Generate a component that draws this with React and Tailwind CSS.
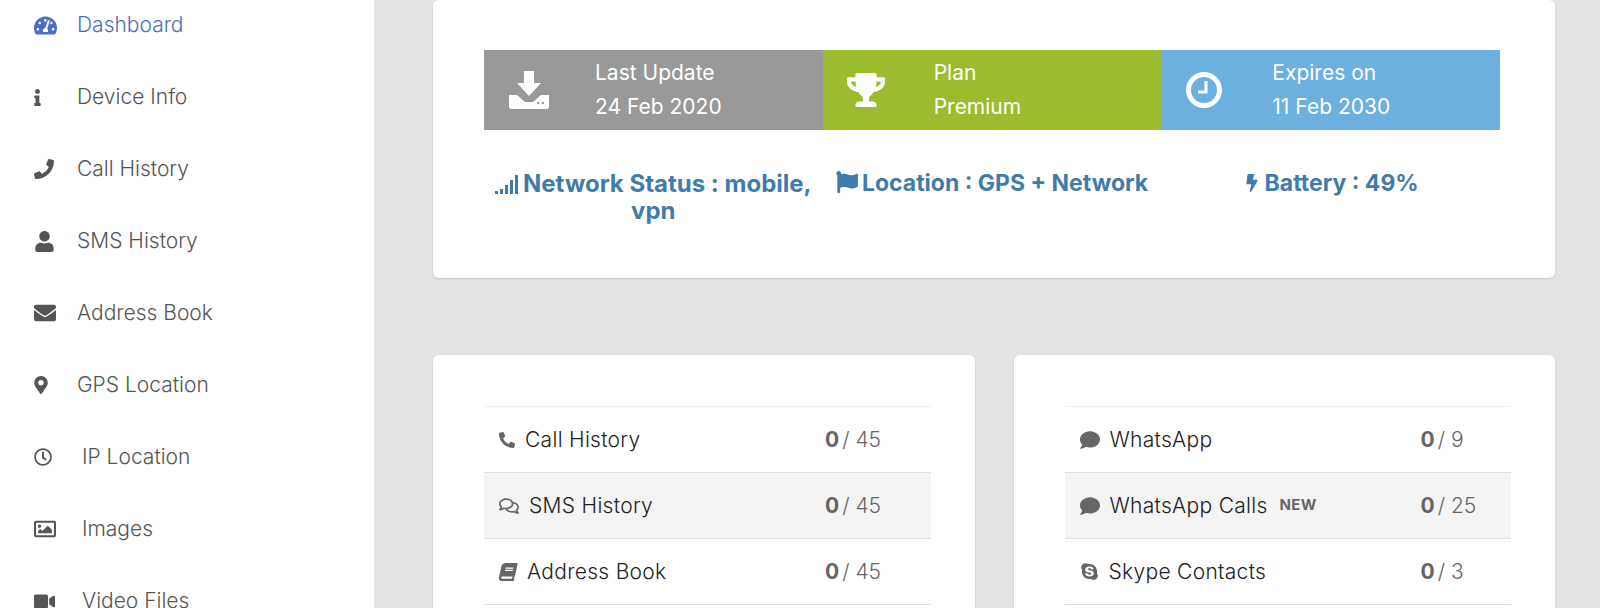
import { FaInfo, FaPhone, FaPhoneAlt, FaUser, FaEnvelope, FaMapMarkerAlt, FaRegClock, FaRegImage, FaVideo, FaTrophy, FaFlag, FaBolt, FaRegComments, FaBook, FaComment, FaSkype, FaTachometerAlt } from "react-icons/fa";

const navItems = [
  { label: "Dashboard", icon: <FaTachometerAlt className="text-[23px]" />, width: "w-[43px]", active: true },
  { label: "Device Info", icon: <FaInfo className="text-[17px] -ml-[5px]" />, width: "w-[43px]" },
  { label: "Call History", icon: <FaPhoneAlt className="text-[20px] -scale-x-100" />, width: "w-[43px]" },
  { label: "SMS History", icon: <FaUser className="text-[21px]" />, width: "w-[43px]" },
  { label: "Address Book", icon: <FaEnvelope className="text-[22px]" />, width: "w-[43px]" },
  { label: "GPS Location", icon: <FaMapMarkerAlt className="text-[18px] -ml-[2px]" />, width: "w-[43px]" },
  { label: "IP Location", icon: <FaRegClock className="text-[18px]" />, width: "w-[48px]" },
  { label: "Images", icon: <FaRegImage className="text-[22px]" />, width: "w-[48px]" },
  { label: "Video Files", icon: <FaVideo className="text-[21px]" />, width: "w-[48px]" },
];

const leftRows = [
  { label: "Call History", icon: <FaPhone className="text-[16px] -scale-x-100" />, total: 45 },
  { label: "SMS History", icon: <FaRegComments className="text-[20px]" />, total: 45 },
  { label: "Address Book", icon: <FaBook className="text-[18px] -skew-x-12" />, total: 45 },
];

const rightRows = [
  { label: "WhatsApp", icon: <FaComment className="text-[20px]" />, total: 9 },
  { label: "WhatsApp Calls", icon: <FaComment className="text-[20px]" />, total: 25, isNew: true },
  { label: "Skype Contacts", icon: <FaSkype className="text-[19px]" />, total: 3 },
];

const DownloadIcon = () => (
  <svg viewBox="0 0 40 38" className="w-[40px] h-[38px]" fill="#fff">
    <path d="M15 0h10v12h7L20 25 8 12h7z" />
    <path d="M0 24h8l8 7h8l8-7h8v12a2 2 0 0 1-2 2H2a2 2 0 0 1-2-2z" />
    <circle cx="29" cy="32" r="1.2" fill="#999" />
    <circle cx="34" cy="32" r="1.2" fill="#999" />
  </svg>
);

const ClockIcon = () => (
  <svg viewBox="0 0 36 36" className="w-[36px] h-[36px]" fill="none">
    <circle cx="18" cy="18" r="15.5" stroke="#fff" strokeWidth="5" />
    <path d="M20 9v11h-8" stroke="#fff" strokeWidth="3" />
  </svg>
);

const SignalIcon = () => (
  <svg viewBox="0 0 24 20" className="inline-block w-[24px] h-[20px] align-[-3px] mr-[4px]" fill="#3f7cac">
    <rect x="0" y="16" width="3" height="3" />
    <rect x="5" y="14" width="3" height="5" />
    <rect x="10" y="10" width="3" height="9" />
    <rect x="15" y="5" width="3" height="14" />
    <rect x="20" y="0" width="3" height="19" />
  </svg>
);

const StatRow = ({ row, striped, colClass }) => (
  <div className={`h-[66px] border-b border-[#dfdfdf] pl-[15px] grid items-center ${colClass} ${striped ? "bg-[#f4f4f4]" : ""}`}>
    <div className="flex items-center gap-[10px] text-[#222] font-light tracking-[0.3px]">
      <span className="text-[#666]">{row.icon}</span>
      <span>{row.label}</span>
      {row.isNew && <span className="ml-[2px] text-[15px] font-bold text-[#666]">NEW</span>}
    </div>
    <div className="text-[#666] font-light">
      <b className="font-bold">0</b>
      <span className="ml-[3px]">/</span> {row.total}
    </div>
  </div>
);

const StatCard = ({ rows, colClass }) => (
  <div className="bg-white rounded-md shadow-sm pt-[51px] pb-[50px] pl-[51px] pr-[44px]">
    <div className="border-t border-[#eeeeee]">
      {rows.map((row, i) => (
        <StatRow key={row.label} row={row} striped={i % 2 === 1} colClass={colClass} />
      ))}
    </div>
  </div>
);

const Tile = ({ icon, color, title, value, iconClass }) => (
  <div className={`h-[80px] flex items-center text-white text-[21px] ${color}`}>
    <div className={`flex justify-center ${iconClass}`}>{icon}</div>
    <div className="leading-[34px]">
      <div>{title}</div>
      <div>{value}</div>
    </div>
  </div>
);

export default function App() {
  return (
    <div className="h-screen overflow-hidden flex bg-[#e4e4e4] text-[21px] font-[Inter,sans-serif]">
      <aside className="w-[374px] shrink-0 bg-white pl-[34px] -mt-[11px] h-[640px]">
        {navItems.map((item) => (
          <div key={item.label} className={`h-[72px] flex items-center font-light ${item.active ? "text-[#4a6fc0]" : "text-[#555]"}`}>
            <span className={`shrink-0 ${item.width}`}>{item.icon}</span>
            <span>{item.label}</span>
          </div>
        ))}
      </aside>

      <main className="flex-1 pl-[59px] pr-[45px]">
        <div className="bg-white rounded-md shadow-sm h-[278px] pl-[51px] pt-[50px] pr-[55px]">
          <div className="grid grid-cols-3">
            <Tile icon={<DownloadIcon />} color="bg-[#999999]" title="Last Update" value="24 Feb 2020" iconClass="w-[111px] pr-[22px]" />
            <Tile icon={<FaTrophy className="text-[38px]" />} color="bg-[#9bbc2e]" title="Plan" value="Premium" iconClass="w-[111px] pr-[24px]" />
            <Tile icon={<ClockIcon />} color="bg-[#6cb0e0]" title="Expires on" value="11 Feb 2030" iconClass="w-[111px] pr-[25px]" />
          </div>
          <div className="grid grid-cols-3 mt-[40px] text-center leading-[27px] font-bold text-[#3f7cac]">
            <div className="px-[8px] text-[24px]">
              <SignalIcon />Network Status : mobile, vpn
            </div>
            <div className="px-[8px] text-[23px]">
              <FaFlag className="inline-block text-[22px] align-[-2px] mr-[4px]" />Location : GPS + Network
            </div>
            <div className="px-[8px] text-[23px]">
              <FaBolt className="inline-block text-[18px] align-[-1px] mr-[4px]" />Battery : 49%
            </div>
          </div>
        </div>

        <div className="grid grid-cols-2 gap-[39px] mt-[77px]">
          <StatCard rows={leftRows} colClass="grid-cols-[326px_1fr]" />
          <StatCard rows={rightRows} colClass="grid-cols-[341px_1fr]" />
        </div>
      </main>
    </div>
  );
}
